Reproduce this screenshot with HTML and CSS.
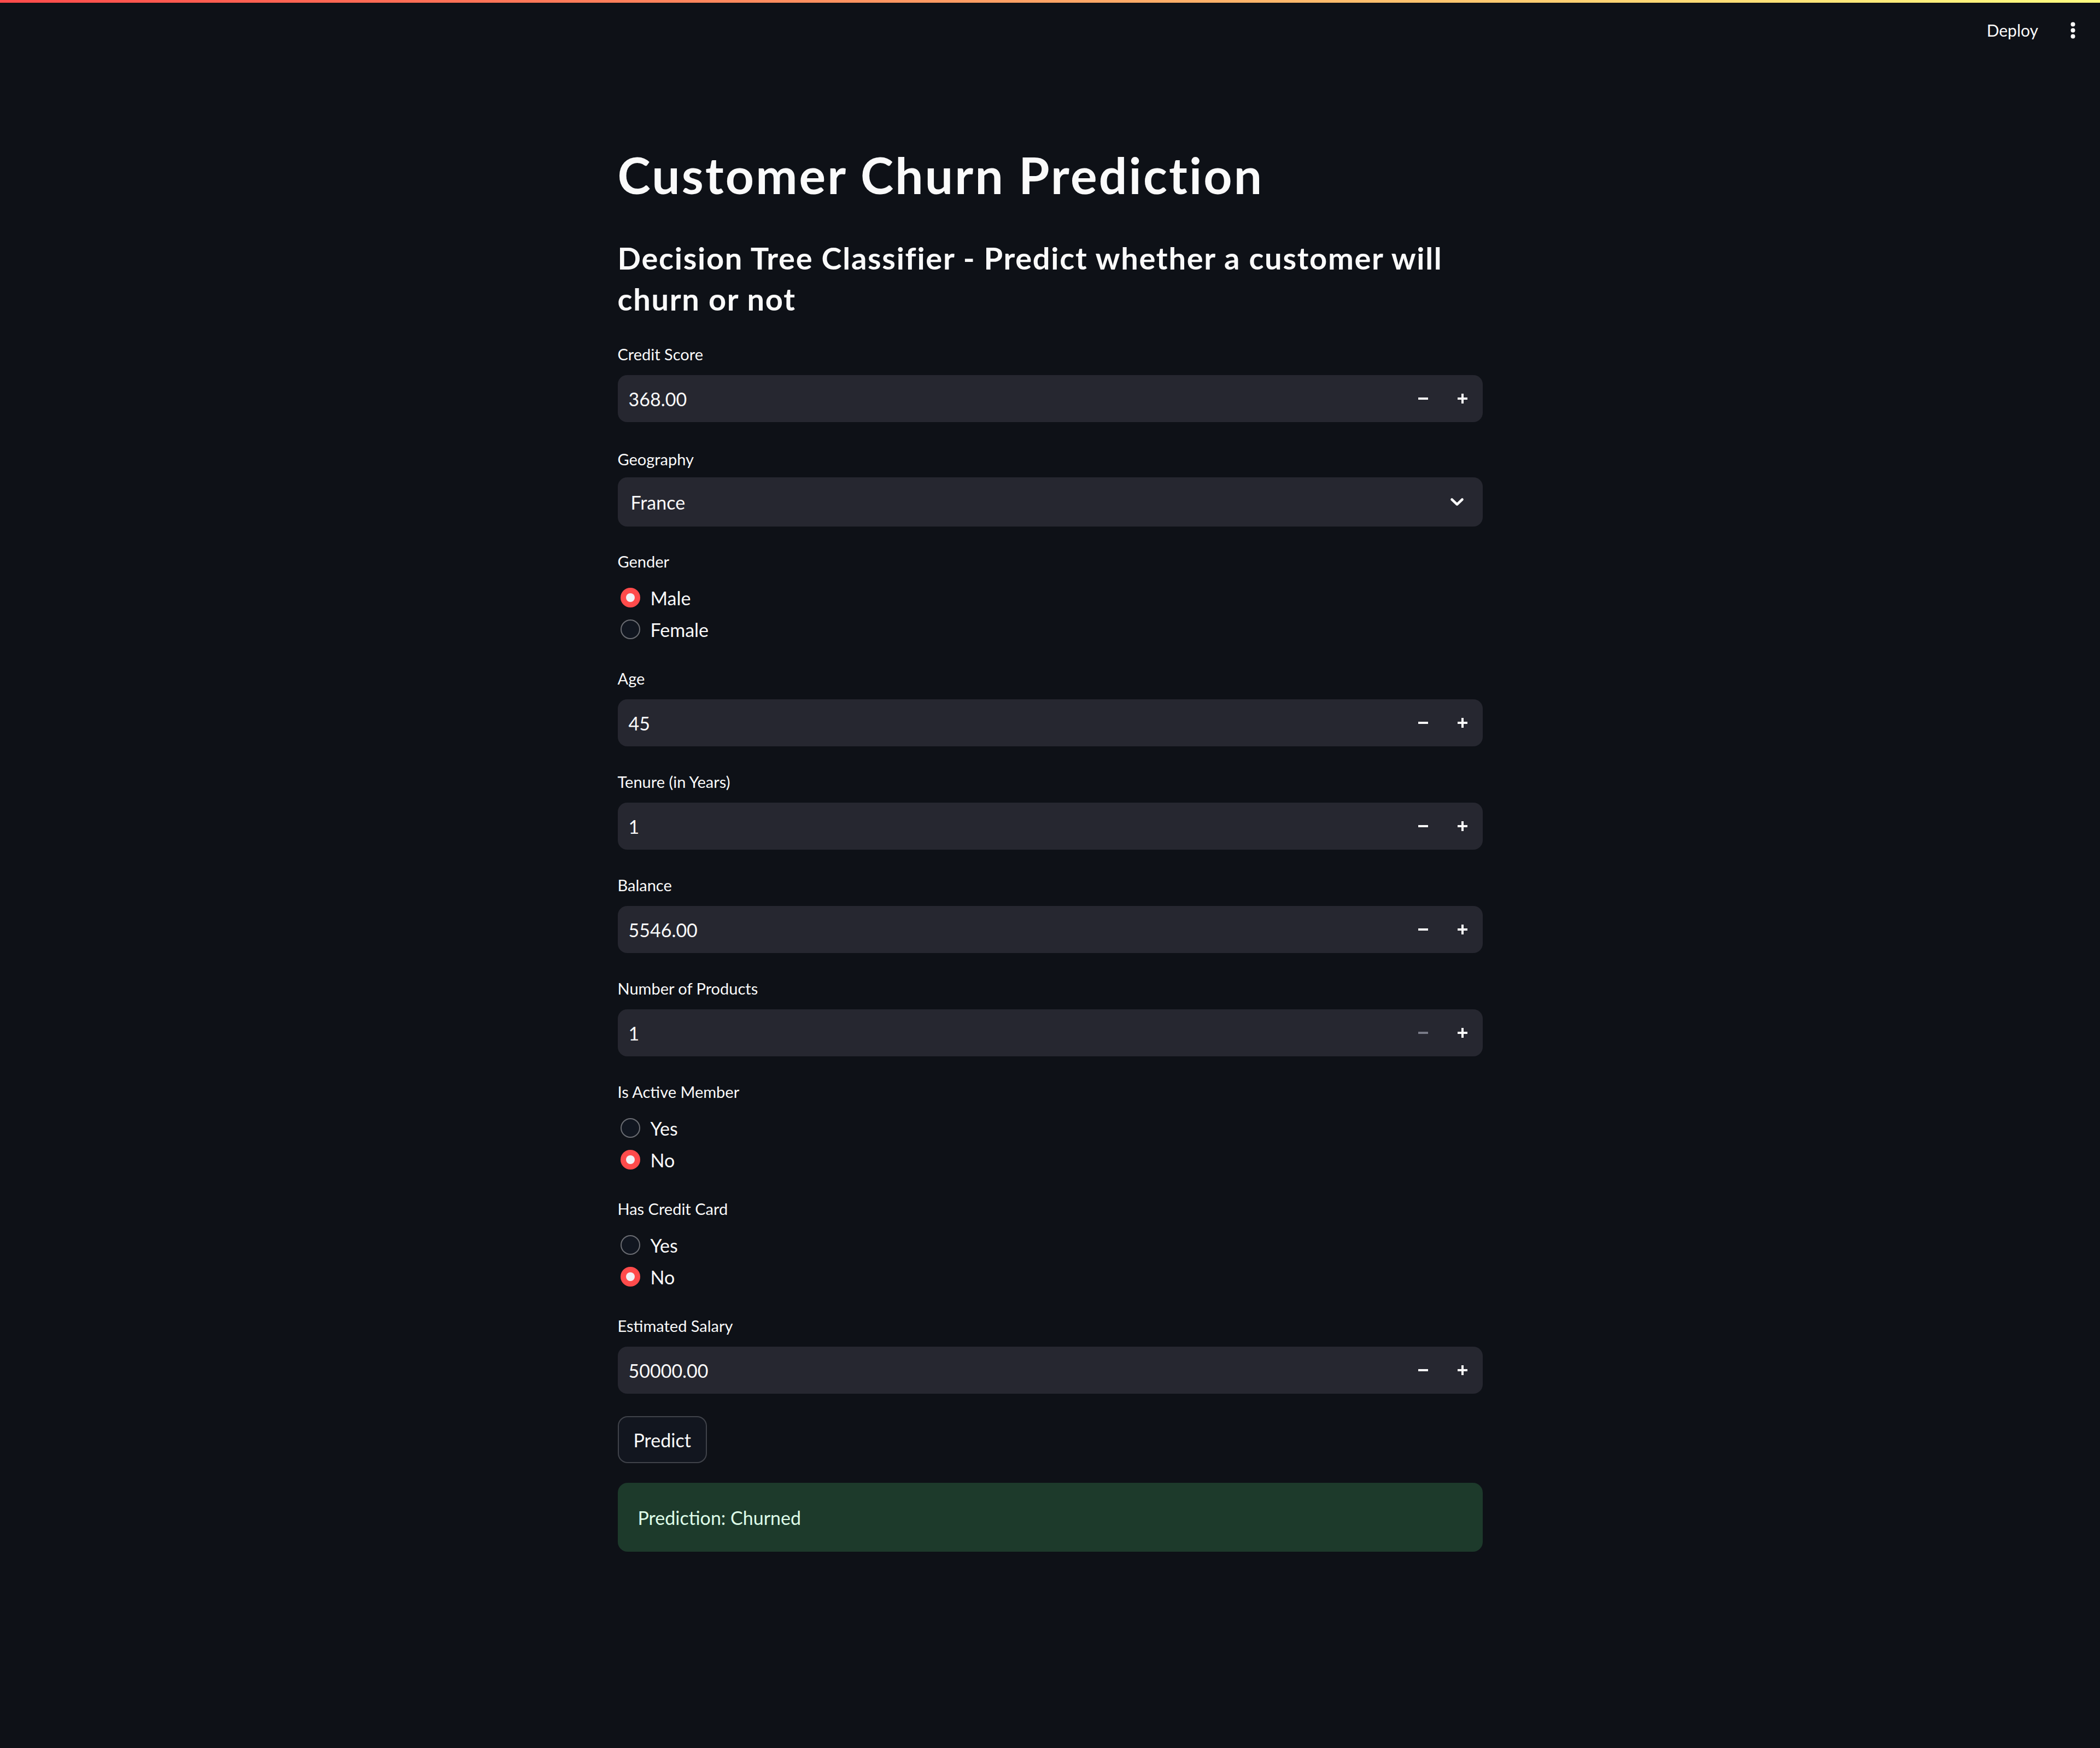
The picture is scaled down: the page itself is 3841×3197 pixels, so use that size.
FILE: index.html
```html
<!DOCTYPE html>
<html lang="en">
<head>
<meta charset="utf-8">
<title>Customer Churn Prediction</title>
<link rel="stylesheet" href="styles.css">
</head>
<body>
<div class="decoration"></div>
<header class="topbar">
  <span class="deploy">Deploy</span>
  <svg class="menu" width="9" height="31" viewBox="0 0 9 31" aria-hidden="true">
    <circle cx="4.5" cy="4.5" r="4"/>
    <circle cx="4.5" cy="15.5" r="4"/>
    <circle cx="4.5" cy="26.5" r="4"/>
  </svg>
</header>

<main class="main">
  <h1 class="title">Customer Churn Prediction</h1>
  <h3 class="subtitle">Decision Tree Classifier - Predict whether a customer will churn or not</h3>

  <div class="field number">
    <div class="label">Credit Score</div>
    <div class="numbox">
      <span class="value">368.00</span>
      <span class="step"><svg viewBox="0 0 18 18"><path d="M0 9H18"/></svg></span>
      <span class="step"><svg viewBox="0 0 18 18"><path d="M0 9H18M9 0V18"/></svg></span>
    </div>
  </div>

  <div class="field select">
    <div class="label">Geography</div>
    <div class="selectbox">
      <span class="value">France</span>
      <svg class="chevron" viewBox="0 0 24 14"><path d="M2.5 2.5L12 11.5L21.5 2.5"/></svg>
    </div>
  </div>

  <div class="field radio">
    <div class="label">Gender</div>
    <div class="option"><span class="dot checked"></span><span>Male</span></div>
    <div class="option"><span class="dot"></span><span>Female</span></div>
  </div>

  <div class="field number">
    <div class="label">Age</div>
    <div class="numbox">
      <span class="value">45</span>
      <span class="step"><svg viewBox="0 0 18 18"><path d="M0 9H18"/></svg></span>
      <span class="step"><svg viewBox="0 0 18 18"><path d="M0 9H18M9 0V18"/></svg></span>
    </div>
  </div>

  <div class="field number">
    <div class="label">Tenure (in Years)</div>
    <div class="numbox">
      <span class="value">1</span>
      <span class="step"><svg viewBox="0 0 18 18"><path d="M0 9H18"/></svg></span>
      <span class="step"><svg viewBox="0 0 18 18"><path d="M0 9H18M9 0V18"/></svg></span>
    </div>
  </div>

  <div class="field number">
    <div class="label">Balance</div>
    <div class="numbox">
      <span class="value">5546.00</span>
      <span class="step"><svg viewBox="0 0 18 18"><path d="M0 9H18"/></svg></span>
      <span class="step"><svg viewBox="0 0 18 18"><path d="M0 9H18M9 0V18"/></svg></span>
    </div>
  </div>

  <div class="field number">
    <div class="label">Number of Products</div>
    <div class="numbox">
      <span class="value">1</span>
      <span class="step disabled"><svg viewBox="0 0 18 18"><path d="M0 9H18"/></svg></span>
      <span class="step"><svg viewBox="0 0 18 18"><path d="M0 9H18M9 0V18"/></svg></span>
    </div>
  </div>

  <div class="field radio">
    <div class="label">Is Active Member</div>
    <div class="option"><span class="dot"></span><span>Yes</span></div>
    <div class="option"><span class="dot checked"></span><span>No</span></div>
  </div>

  <div class="field radio">
    <div class="label">Has Credit Card</div>
    <div class="option"><span class="dot"></span><span>Yes</span></div>
    <div class="option"><span class="dot checked"></span><span>No</span></div>
  </div>

  <div class="field number">
    <div class="label">Estimated Salary</div>
    <div class="numbox">
      <span class="value">50000.00</span>
      <span class="step"><svg viewBox="0 0 18 18"><path d="M0 9H18"/></svg></span>
      <span class="step"><svg viewBox="0 0 18 18"><path d="M0 9H18M9 0V18"/></svg></span>
    </div>
  </div>

  <button class="predict" type="button">Predict</button>

  <div class="alert">Prediction: Churned</div>
</main>
</body>
</html>
```

FILE: styles.css
```css
html, body {
  margin: 0;
  padding: 0;
}

body {
  background: #0e1117;
  color: #fafafa;
  font-family: Lato, "Noto Sans", "Liberation Sans", sans-serif;
}

.decoration {
  height: 5px;
  background: linear-gradient(90deg, #ff4b4b, #fffd80);
}

.topbar {
  height: 100px;
  display: flex;
  justify-content: flex-end;
  align-items: center;
  gap: 59px;
  padding-right: 45px;
}

.deploy {
  font-size: 30px;
  line-height: 1;
}

.menu circle {
  fill: #fafafa;
}

.main {
  width: 1582px;
  margin: 0 auto;
  padding: 160px 0 200px;
  display: flex;
  flex-direction: column;
  gap: 36px;
}

.title {
  margin: 0 0 24px;
  font-size: 91px;
  line-height: 109px;
  font-weight: 700;
  letter-spacing: 3.2px;
}

.subtitle {
  margin: 0 0 3px;
  font-size: 56px;
  line-height: 75px;
  font-weight: 700;
  letter-spacing: 1.7px;
}

.field {
  display: flex;
  flex-direction: column;
}

.label {
  font-size: 29px;
  line-height: 50px;
  height: 50px;
}

.number {
  margin-bottom: 4px;
}

.number .label {
  margin-bottom: 13px;
}

.select {
  margin: 3px 0;
}

.select .label {
  margin-bottom: 8px;
}

.radio .label {
  margin-bottom: 12px;
}

.numbox,
.selectbox {
  display: flex;
  align-items: center;
  background: #262730;
  border-radius: 17px;
}

.numbox {
  height: 86px;
  padding-left: 20px;
  padding-right: 1px;
}

.selectbox {
  height: 90px;
  padding: 0 35px 0 24px;
}

.value {
  flex: 1;
  font-size: 34px;
}

.step {
  width: 72px;
  height: 86px;
  display: flex;
  align-items: center;
  justify-content: center;
}

.step svg {
  width: 18px;
  height: 18px;
}

.step path {
  stroke: #fafafa;
  stroke-width: 4;
  fill: none;
}

.step.disabled path {
  stroke: #787a86;
}

.chevron {
  width: 24px;
  height: 14px;
}

.chevron path {
  stroke: #fafafa;
  stroke-width: 4.5;
  fill: none;
  stroke-linecap: round;
  stroke-linejoin: round;
}

.option {
  height: 58px;
  display: flex;
  align-items: center;
  gap: 19px;
  padding-left: 5px;
  font-size: 34px;
}

.dot {
  width: 36px;
  height: 36px;
  box-sizing: border-box;
  border-radius: 50%;
  border: 2px solid #6a6c72;
  background: #111620;
  display: flex;
  align-items: center;
  justify-content: center;
}

.dot.checked {
  border: none;
  background: #ff4b4b;
}

.dot.checked::after {
  content: "";
  width: 16px;
  height: 16px;
  border-radius: 50%;
  background: #f0f2f6;
}

.predict {
  align-self: flex-start;
  height: 86px;
  padding: 0 27px;
  margin: 1px 0 0;
  font-family: inherit;
  font-size: 34px;
  color: #fafafa;
  background: #12161f;
  border: 2px solid rgba(250, 250, 250, 0.2);
  border-radius: 18px;
}

.alert {
  height: 126px;
  box-sizing: border-box;
  padding: 0 37px;
  display: flex;
  align-items: center;
  background: #1d3a2b;
  color: #dffde9;
  border-radius: 18px;
  font-size: 34px;
}
```
